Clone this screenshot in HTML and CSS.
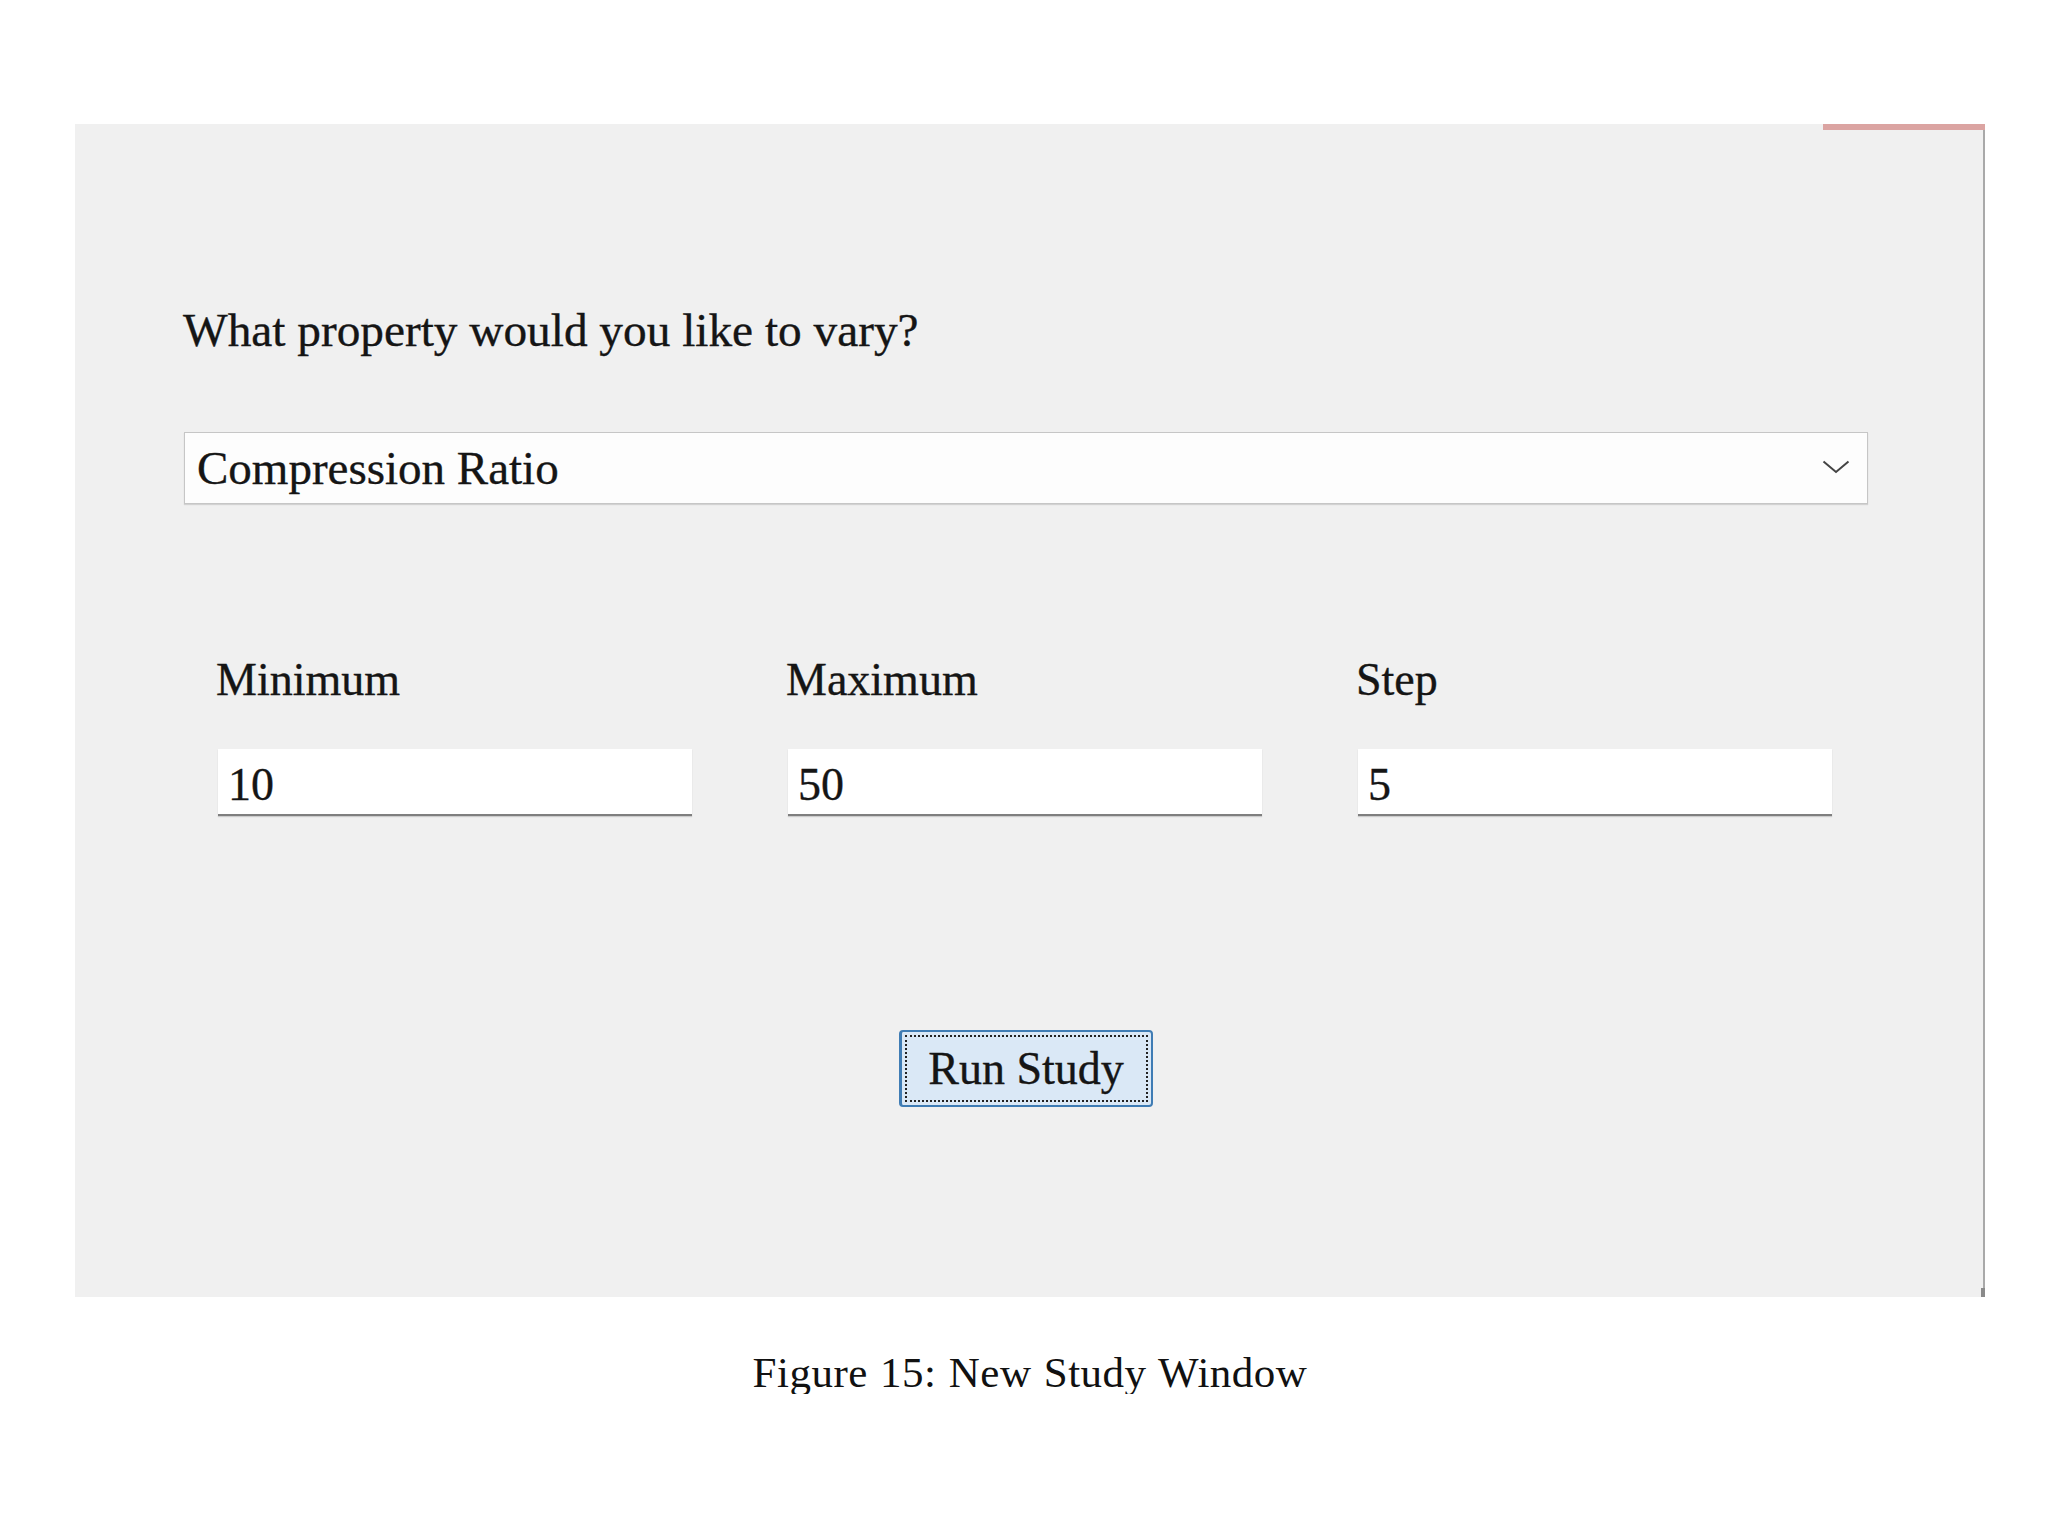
FILE: index.html
```html
<!DOCTYPE html>
<html lang="en">
<head>
<meta charset="utf-8">
<title>New Study Window</title>
<link rel="stylesheet" href="styles.css">
</head>
<body>
<div class="figure">
  <div class="window">
    <div class="close-strip"></div>
    <div class="grip"></div>
    <div class="content">
      <div class="question">What property would you like to vary?</div>
      <div class="select">
        <span class="select-value">Compression Ratio</span>
        <svg class="chevron" width="28" height="14" viewBox="0 0 28 14"><polyline points="1.5,1.5 14,12 26.5,1.5" fill="none" stroke="#444" stroke-width="2"/></svg>
      </div>
      <div class="fields">
        <div class="field">
          <div class="label">Minimum</div>
          <div class="input">10</div>
        </div>
        <div class="field">
          <div class="label">Maximum</div>
          <div class="input">50</div>
        </div>
        <div class="field">
          <div class="label">Step</div>
          <div class="input">5</div>
        </div>
      </div>
      <div class="actions">
        <div class="button">Run Study</div>
      </div>
    </div>
  </div>
  <div class="caption">Figure 15: New Study Window</div>
</div>
</body>
</html>
```

FILE: styles.css
```css
html, body {
  margin: 0;
  padding: 0;
  background: #ffffff;
}

body {
  font-family: "Liberation Serif", "Times New Roman", serif;
  color: #151515;
}

.figure {
  width: 1910px;
  margin: 124px 0 0 75px;
}

.window {
  position: relative;
  box-sizing: border-box;
  width: 1910px;
  height: 1173px;
  background: #f0f0f0;
  border-right: 2px solid #a9a9a9;
  -webkit-text-stroke: 0.35px #151515;
}

.close-strip {
  position: absolute;
  top: 0;
  right: -2px;
  width: 162px;
  height: 6px;
  background: #dba4a2;
}

.grip {
  position: absolute;
  right: -2px;
  bottom: 0;
  width: 4px;
  height: 9px;
  background: #8a8a8a;
}

.content {
  box-sizing: border-box;
  width: 1793px;
  padding: 183px 0 0 108px;
}

.question {
  font-size: 47.3px;
  line-height: 47px;
  white-space: nowrap;
}

.select {
  box-sizing: border-box;
  margin: 78px 0 0 1px;
  width: 1684px;
  height: 72px;
  background: #fdfdfd;
  border: 1px solid #c6c6c6;
  box-shadow: 0 1px 1px rgba(0, 0, 0, 0.12);
  display: flex;
  align-items: center;
  justify-content: space-between;
  padding: 0 17px 0 12px;
}

.select-value {
  font-size: 47px;
  line-height: 70px;
  white-space: nowrap;
}

.chevron {
  display: block;
  margin-top: -2px;
}

.fields {
  display: grid;
  grid-template-columns: repeat(3, 474px);
  column-gap: 96px;
  margin: 153px 0 0 35px;
}

.label {
  font-size: 46px;
  line-height: 46px;
  margin-left: -2px;
  white-space: nowrap;
}

.input {
  box-sizing: border-box;
  margin-top: 46px;
  height: 67px;
  background: #ffffff;
  border-bottom: 2px solid #7f7f7f;
  box-shadow: 0 1px 1px rgba(0, 0, 0, 0.15);
  padding: 13px 11px 0 10px;
  font-size: 46px;
  line-height: 46px;
}

.actions {
  display: flex;
  justify-content: center;
  width: 1685px;
  margin-top: 214px;
}

.button {
  position: relative;
  box-sizing: border-box;
  width: 254px;
  height: 77px;
  background: #dae8f6;
  border: 2px solid #3f7cb4;
  border-left-width: 3px;
  border-radius: 4px;
  text-align: center;
  font-size: 46px;
  line-height: 74px;
  white-space: nowrap;
}

.button::after {
  content: "";
  position: absolute;
  top: 3px;
  left: 3px;
  right: 3px;
  bottom: 3px;
  border: 2px dotted #222;
  -webkit-text-stroke: 0;
}

.caption {
  margin-top: 54px;
  text-align: center;
  font-size: 43px;
  line-height: 43px;
  letter-spacing: 0.5px;
  word-spacing: 1px;
  color: #111;
}
```
